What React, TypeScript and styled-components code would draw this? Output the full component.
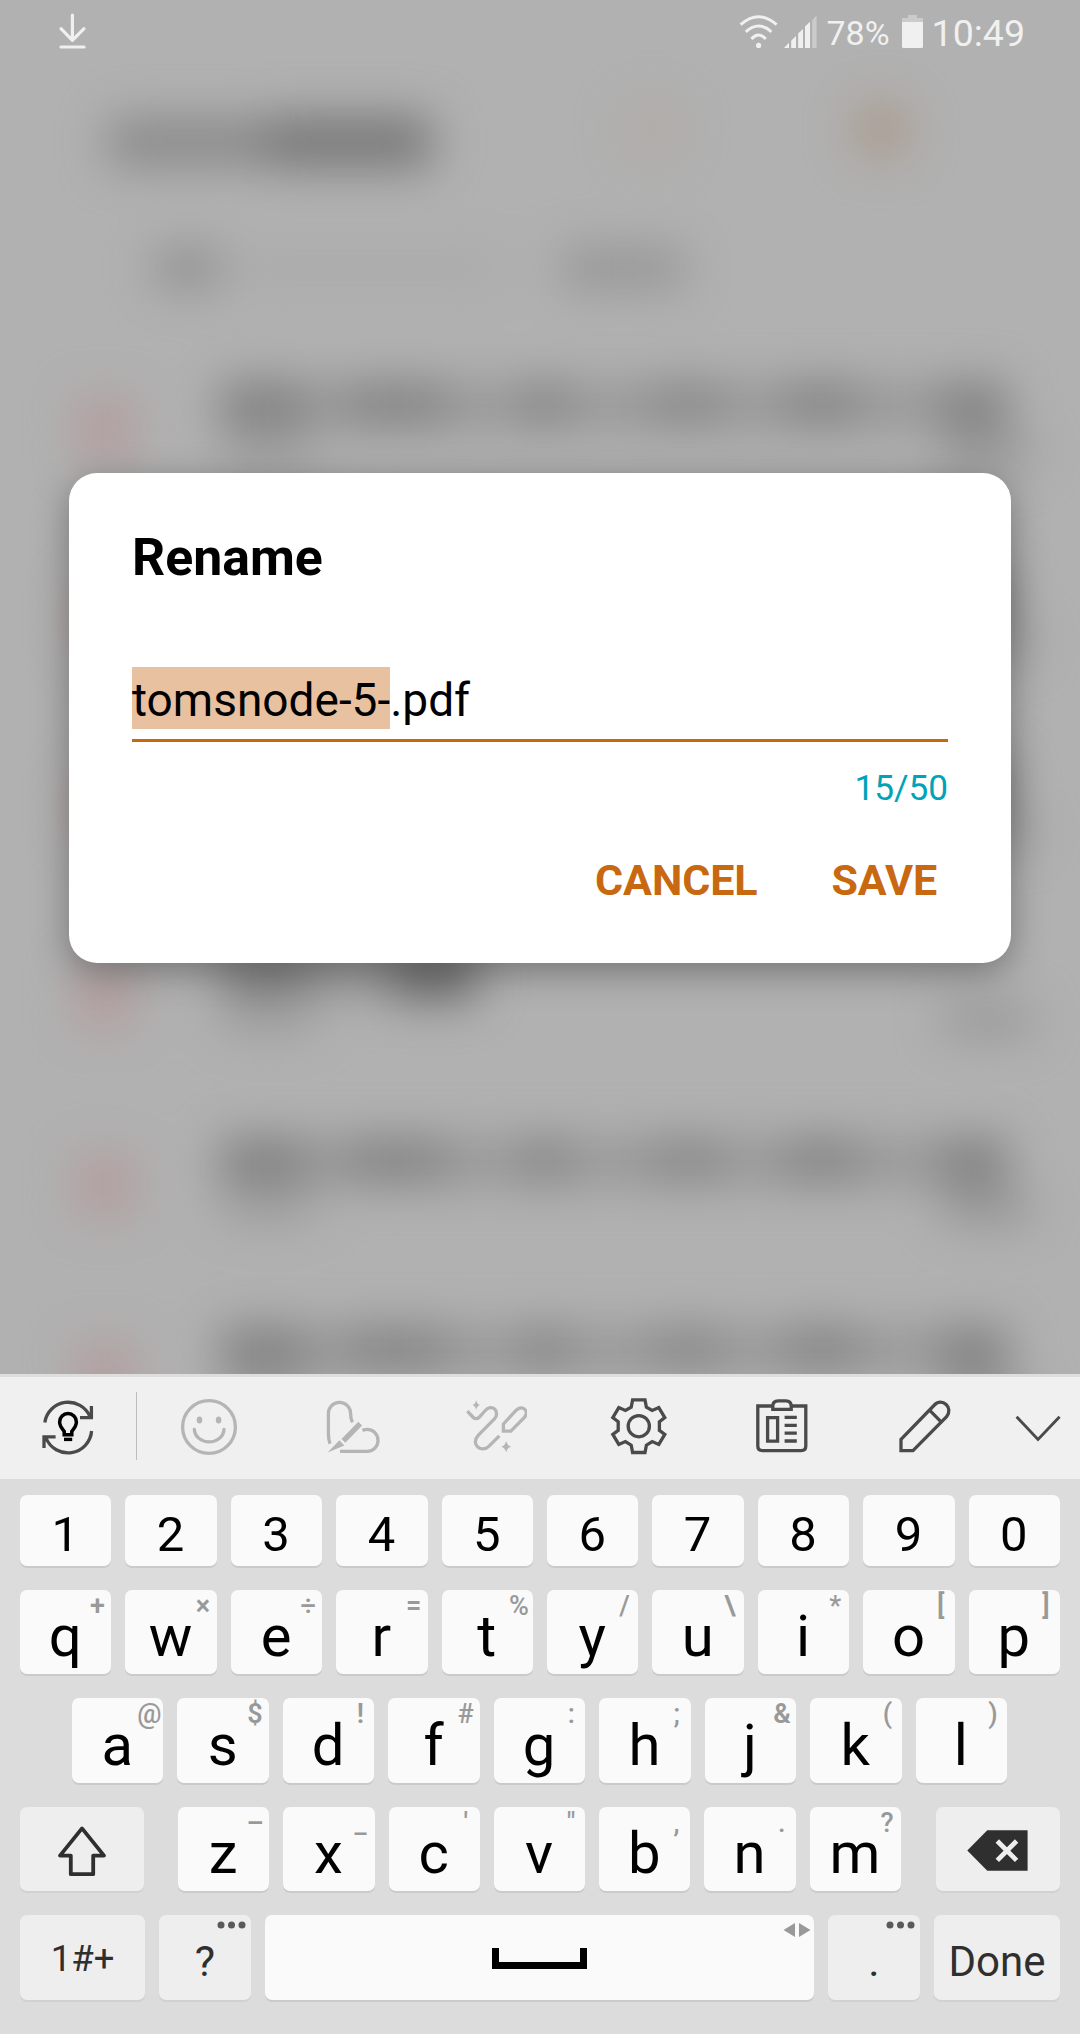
import React from "react";
import styled, { createGlobalStyle } from "styled-components";

const GlobalStyle = createGlobalStyle`
  * { box-sizing: border-box; }
  body { margin: 0; background: #b1b1b1; }
`;

const accent = "#c86810";

const Screen = styled.main`
  position: relative;
  width: 1080px;
  height: 2034px;
  display: flex;
  flex-direction: column;
  overflow: hidden;
  background: #b1b1b1;
  color: #000;
  font-family: Roboto, "Noto Sans", sans-serif;
`;

/* ---------- dimmed file list behind the dialog ---------- */

const Backdrop = styled.div`
  position: absolute;
  inset: 0 0 560px 0;
  overflow: hidden;
  filter: blur(23px);
`;

const BackHeader = styled.div`
  display: flex;
  align-items: center;
  height: 100px;
  margin-top: 92px;
  padding-left: 108px;
`;

const BackPath = styled.div`
  display: flex;
  align-items: center;
  height: 60px;
  margin-top: 46px;
  padding-left: 155px;
`;

const BackList = styled.div`
  margin-top: 26px;
`;

const Smudge = styled.span<{ w: number; h: number; tone: string; gap?: number; round?: boolean }>`
  flex: none;
  width: ${(p) => p.w}px;
  height: ${(p) => p.h}px;
  margin-left: ${(p) => p.gap ?? 0}px;
  margin-bottom: ${(p) => (p.round ? 24 : 0)}px;
  border-radius: ${(p) => (p.round ? "50%" : "6px")};
  background: ${(p) => p.tone};
`;

const BackRow = styled.div`
  display: flex;
  height: 189px;
  padding: 58px 0 0 76px;
`;

const BackThumb = styled.span`
  flex: none;
  width: 58px;
  height: 62px;
  margin-top: 16px;
  background: #b39d9d;
`;

const BackText = styled.div`
  margin-left: 86px;
  width: 812px;
`;

const BackTitle = styled.div<{ w: number }>`
  display: flex;
  width: ${(p) => p.w}px;
  height: 48px;
  background: #989898;
`;

const BackMeta = styled.div`
  display: flex;
  justify-content: space-between;
  margin-top: 10px;
`;

/* ---------- status bar ---------- */

const StatusBar = styled.header`
  position: relative;
  display: flex;
  align-items: flex-start;
  height: 60px;
  padding: 12px 55px 0 57px;
  color: #f0f0f0;
`;

const StatusIcon = styled.svg<{ gap?: number }>`
  display: block;
  flex: none;
  margin-left: ${(p) => p.gap ?? 0}px;
`;

const StatusText = styled.span<{ size: number; gap: number; drop?: number }>`
  font-size: ${(p) => p.size}px;
  line-height: 40px;
  margin: ${(p) => p.drop ?? 0}px 0 0 ${(p) => p.gap}px;
`;

const Spacer = styled.span`
  flex: 1;
`;

/* ---------- dialog ---------- */

const Stage = styled.section`
  height: 1374px;
  flex: none;
`;

const Dialog = styled.div`
  position: relative;
  width: 942px;
  height: 490px;
  margin: 413px auto 0 69px;
  padding: 55px 63px 0;
  border-radius: 28px;
  background: #fff;
  box-shadow: 0 9px 36px rgba(0, 0, 0, 0.34);
`;

const Title = styled.h1`
  margin: 0;
  font-size: 51.8px;
  line-height: 60px;
  font-weight: 700;
`;

const Field = styled.div`
  display: flex;
  height: 75px;
  margin-top: 79px;
  padding-bottom: 10px;
  border-bottom: 3px solid ${accent};
  font-size: 46px;
  line-height: 66px;
`;

const Selected = styled.span`
  height: 62px;
  background: #e8c1a1;
`;

const Counter = styled.div`
  margin-top: 25px;
  text-align: right;
  font-size: 35.2px;
  line-height: 42px;
  color: #00a3b8;
`;

const Actions = styled.div`
  display: flex;
  justify-content: flex-end;
  gap: 74px;
  margin-top: 46px;
  padding-right: 11px;
`;

const Action = styled.button`
  padding: 0;
  border: 0;
  background: none;
  font: 700 43px/50px Roboto, "Noto Sans", sans-serif;
  letter-spacing: -0.1px;
  color: ${accent};
`;

/* ---------- keyboard ---------- */

const Keyboard = styled.section`
  position: relative;
  flex: 1;
  background: #dcdcdc;
`;

const Toolbar = styled.div`
  display: flex;
  align-items: center;
  height: 105px;
  border-top: 3px solid #dedede;
  background: #f0f0f0;
`;

const Tool = styled.div<{ w?: number }>`
  display: flex;
  justify-content: center;
  flex: ${(p) => (p.w ? `0 0 ${p.w}px` : "1")};
`;

const Divider = styled.span`
  width: 1px;
  height: 68px;
  margin-top: -4px;
  background: #bdbdbd;
`;

const Rows = styled.div`
  display: flex;
  flex-direction: column;
  gap: 24px;
  padding: 16px 20px 0;
`;

const Row = styled.div<{ h: number; inset?: number }>`
  display: flex;
  gap: 14px;
  height: ${(p) => p.h}px;
  padding: 0 ${(p) => (p.inset ? p.inset + 1 : 0)}px 0 ${(p) => p.inset ?? 0}px;
`;

const Key = styled.div<{ size?: number; drop?: number; w?: number; alt?: boolean; left?: number; right?: number }>`
  position: relative;
  display: flex;
  align-items: center;
  justify-content: center;
  flex: ${(p) => (p.w ? `0 0 ${p.w}px` : "1 1 0")};
  min-width: 0;
  margin: 0 ${(p) => p.right ?? 0}px 0 ${(p) => p.left ?? 0}px;
  padding-top: ${(p) => p.drop ?? 0}px;
  padding-right: ${(p) => (p.alt ? 0 : 1)}px;
  border-radius: 7px;
  background: ${(p) => (p.alt ? "#eeeeee" : "#fafafa")};
  box-shadow: 0 2px 0 ${(p) => (p.alt ? "#d1d1d1" : "#cacaca")};
  color: ${(p) => (p.alt ? "#2f2f2f" : "#000")};
  font-size: ${(p) => p.size ?? 58}px;
  line-height: 1;
`;

const Hint = styled.span<{ bold?: boolean }>`
  position: absolute;
  top: 0;
  right: 0;
  width: 28px;
  display: flex;
  justify-content: center;
  font-size: 27px;
  line-height: 32px;
  font-weight: ${(p) => (p.bold ? 600 : 500)};
  color: #999;
`;

const Corner = styled.svg<{ inset: number; drop: number }>`
  position: absolute;
  top: ${(p) => p.drop}px;
  right: ${(p) => p.inset}px;
`;

const SpaceMark = styled.span`
  width: 95px;
  height: 21px;
  margin-top: 2px;
  border: 7px solid #000;
  border-top: 0;
`;

const digits = "1234567890".split("");
const boldHints = new Set(["+", "×", "=", "\\", "[", "]", "$", "!", "&"]);
const topRow: [string, string][] = [
  ["q", "+"], ["w", "×"], ["e", "÷"], ["r", "="], ["t", "%"],
  ["y", "/"], ["u", "\\"], ["i", "*"], ["o", "["], ["p", "]"],
];
const homeRow: [string, string][] = [
  ["a", "@"], ["s", "$"], ["d", "!"], ["f", "#"], ["g", ":"],
  ["h", ";"], ["j", "&"], ["k", "("], ["l", ")"],
];
const bottomRow: [string, string][] = [
  ["z", "–"], ["x", "_"], ["c", "'"], ["v", '"'], ["b", ","], ["n", "."], ["m", "?"],
];

const LetterKey = ({ pair }: { pair: [string, string] }) => (
  <Key drop={8}>
    {pair[0]}
    <Hint bold={boldHints.has(pair[1])}>{pair[1]}</Hint>
  </Key>
);

const ToolIcon = ({ x, color = "#4a4a4a", children }: { x: number; color?: string; children: React.ReactNode }) => (
  <svg width="64" height="64" viewBox={`${x - 32} 1396 64 64`} fill="none" stroke={color} strokeWidth="3.3">
    {children}
  </svg>
);

const Dots = () => (
  <Corner inset={5} drop={6} width="29" height="8" viewBox="0 0 29 8" fill="#5a5a5a">
    <circle cx="4" cy="4" r="3.5" />
    <circle cx="14.5" cy="4" r="3.5" />
    <circle cx="25" cy="4" r="3.5" />
  </Corner>
);

const FileRow = ({ short }: { short?: boolean }) => (
  <BackRow>
    <BackThumb />
    <BackText>
      {short ? (
        <BackTitle w={256}>
          <Smudge w={84} h={48} tone="#7e7e7e" gap={4} />
          <Smudge w={84} h={52} tone="#6c6c6c" gap={84} />
        </BackTitle>
      ) : (
        <BackTitle w={775}>
          <Smudge w={86} h={48} tone="#808080" />
          <Smudge w={100} h={42} tone="#828282" gap={40} />
          <Smudge w={42} h={42} tone="#828282" gap={78} />
          <Smudge w={70} h={40} tone="#868686" gap={86} />
          <Smudge w={74} h={40} tone="#828282" gap={62} />
          <Smudge w={66} h={50} tone="#808080" gap={84} />
        </BackTitle>
      )}
      <BackMeta>
        <Smudge w={92} h={24} tone="#999" gap={2} />
        <Smudge w={90} h={26} tone="#909090" />
      </BackMeta>
    </BackText>
  </BackRow>
);

export default function App() {
  return (
    <Screen>
      <GlobalStyle />
      <Backdrop aria-hidden>
        <BackHeader>
          <Smudge w={157} h={48} tone="#8a8a8a" />
          <Smudge w={167} h={52} tone="#787878" />
          <Smudge w={56} h={56} tone="#b1aaa4" gap={192} round />
          <Smudge w={58} h={58} tone="#aa9a8c" gap={172} round />
        </BackHeader>
        <BackPath>
          <Smudge w={66} h={40} tone="#909090" />
          <Smudge w={260} h={20} tone="#a6a6a6" gap={20} />
          <Smudge w={124} h={40} tone="#959595" gap={60} />
        </BackPath>
        <BackList>
          <FileRow />
          <FileRow />
          <FileRow />
          <FileRow short />
          <FileRow />
          <FileRow />
        </BackList>
      </Backdrop>

      <Stage>
        <StatusBar>
          <StatusIcon width="30" height="40" viewBox="57 12 30 40" fill="none" stroke="#f0f0f0" strokeWidth="3.2" strokeLinecap="round" strokeLinejoin="round">
            <path d="M72.4 15V40M61 28.7L72.4 40.4L84 28.7M61 47H84" />
          </StatusIcon>
          <Spacer />
          <StatusIcon width="42" height="40" viewBox="739 12 42 40" fill="none" stroke="#f0f0f0" strokeWidth="3">
            <path d="M741.6 24.6Q759.6 8.8 777.6 24.6M746.8 31.8Q759.6 20.2 772.4 31.8M752.4 39Q759.6 31 766.8 39" />
            <circle cx="759.6" cy="45.4" r="2.6" fill="#f0f0f0" stroke="none" />
          </StatusIcon>
          <StatusIcon gap={3} width="35" height="40" viewBox="784 12 35 40" fill="#f0f0f0">
            <path d="M785 48L790 42.8V48ZM792.2 48V40.8L797 36V48ZM799.2 48V33.6L804 28.9V48ZM806 48V26.6L811 21.8V48Z" />
            <path d="M813.2 48V20L817.6 15.6V48Z" fill="#cbcbcb" />
          </StatusIcon>
          <StatusText size={34} gap={8} drop={1}>78%</StatusText>
          <StatusIcon gap={11} width="23" height="40" viewBox="901 12 23 40">
            <path d="M902 22V18H908V15H917V18H923V22Z" fill="#cbcbcb" />
            <path d="M902 22H923V46.5Q923 48 921.5 48H903.5Q902 48 902 46.5Z" fill="#f0f0f0" />
          </StatusIcon>
          <StatusText size={37.5} gap={8} drop={1}>10:49</StatusText>
        </StatusBar>

        <Dialog role="dialog">
          <Title>Rename</Title>
          <Field>
            <Selected>tomsnode-5-</Selected>
            <span>.pdf</span>
          </Field>
          <Counter>15/50</Counter>
          <Actions>
            <Action>CANCEL</Action>
            <Action>SAVE</Action>
          </Actions>
        </Dialog>
      </Stage>

      <Keyboard>
        <Toolbar>
          <Tool w={136}>
            <ToolIcon x={68}>
              <path d="M44.8 1422.4A23.7 23.7 0 0 1 90 1416.6M91.4 1406V1417.6H80M91.6 1431A23.7 23.7 0 0 1 46 1438M44 1448V1436.8H55.6" />
              <g stroke="#000">
                <path d="M64.2 1434.8V1431.4C62 1428.6 59.6 1426 59.6 1422A8.4 8.4 0 0 1 76.4 1422C76.4 1426 74 1428.6 71.8 1431.4V1434.8Z" strokeWidth="3.5" />
                <path d="M64 1439.4H72.2" strokeWidth="3.4" />
              </g>
            </ToolIcon>
          </Tool>
          <Divider />
          <Tool w={143.2}>
            <ToolIcon x={209} color="#b5b5b5">
              <circle cx="209" cy="1427" r="26.4" />
              <path d="M194.3 1429.5C196 1446 222.4 1446 224 1429.5" strokeLinecap="round" />
              <ellipse cx="199.5" cy="1420" rx="2.8" ry="3.6" fill="#b5b5b5" stroke="none" />
              <ellipse cx="218.6" cy="1420" rx="2.8" ry="3.6" fill="#b5b5b5" stroke="none" />
            </ToolIcon>
          </Tool>
          <Tool w={143.2}>
            <ToolIcon x={352} color="#b5b5b5">
              <path d="M330 1443.8C328.6 1440 328.4 1438 328.4 1434V1413.5A11 11 0 0 1 350.6 1413.5C350.6 1418 351 1419.5 352.4 1422.4M362.4 1430.4C365 1429.4 366 1429.4 367.4 1429.4A10.6 11 0 0 1 367.4 1451.4H340" />
              <path d="M360.2 1423.6L343.4 1440.8" strokeWidth="5.4" />
              <path d="M327.6 1452.6L339.4 1440.2L344.4 1445.6Z" fill="#b5b5b5" stroke="none" />
            </ToolIcon>
          </Tool>
          <Tool w={143.2}>
            <ToolIcon x={495.2} color="#b5b5b5">
              <path d="M467.5 1411.2L473 1417Q476.3 1420.4 479.6 1417L485 1411C492 1402.6 501 1411.6 494.6 1419L478.4 1435.4C470 1444.6 482 1453.4 489 1446.4L499.6 1435.8" />
              <path d="M503.6 1424L516.4 1410.2C523 1404.4 530 1411.2 524.4 1417.6L511 1431.2H503.6Z" />
              <path d="M476.4 1400.2Q477.2 1404.2 480.4 1405Q477.2 1405.8 476.4 1410Q475.6 1405.8 472.4 1405Q475.6 1404.2 476.4 1400.2ZM506.4 1440.8Q507.4 1445.8 511.4 1446.7Q507.4 1447.6 506.4 1452.6Q505.4 1447.6 501.4 1446.7Q505.4 1445.8 506.4 1440.8Z" fill="#b5b5b5" stroke="none" />
            </ToolIcon>
          </Tool>
          <Tool w={143.2}>
            <ToolIcon x={638.4}>
              <g transform="translate(639.2 1426.2)">
                <path d="M-6.2 -26.3H6.2L7.6 -19L13.4 -15.8L20 -18.6L26 -8.6L20.6 -4.4V4.2L26 8.2L20 18.2L13.4 15.4L7.6 19L6.2 26.3H-6.2L-7.6 19L-13.4 15.4L-20 18.2L-26 8.2L-20.6 4.2V-4.4L-26 -8.6L-20 -18.6L-13.4 -15.8L-7.6 -19Z" />
                <circle r="10.6" />
              </g>
            </ToolIcon>
          </Tool>
          <Tool w={143.2}>
            <ToolIcon x={781.2}>
              <path d="M773 1406H758V1446Q758 1450.6 762.6 1450.6H801.4Q806 1450.6 806 1446V1406H791.4" />
              <path d="M773 1409.4V1406Q773 1400.8 778.4 1400.8H786Q791.4 1400.8 791.4 1406V1409.4Z" />
              <path d="M767.8 1417.6H777.8V1441.2H767.8ZM784.8 1417.4H797M784.8 1425.4H797M784.8 1433.2H797M784.8 1441H797" />
            </ToolIcon>
          </Tool>
          <Tool w={143.2}>
            <ToolIcon x={924.8}>
              <path d="M900.8 1439.4V1450.6H912.8L946.4 1416.6C953.6 1407.6 942 1397 934.2 1405ZM929.8 1410.6L941.2 1422.2" />
            </ToolIcon>
          </Tool>
          <Tool>
            <ToolIcon x={1038}>
              <path d="M1016.6 1416.8L1038 1439.4L1059.6 1416.8" strokeWidth="2.9" />
            </ToolIcon>
          </Tool>
        </Toolbar>

        <Rows>
          <Row h={71}>
            {digits.map((d) => (
              <Key key={d} size={49} drop={7}>{d}</Key>
            ))}
          </Row>
          <Row h={84}>
            {topRow.map((p) => <LetterKey key={p[0]} pair={p} />)}
          </Row>
          <Row h={85} inset={52}>
            {homeRow.map((p) => <LetterKey key={p[0]} pair={p} />)}
          </Row>
          <Row h={84}>
            <Key alt w={124} right={20} drop={3}>
              <svg width="52" height="54" viewBox="56 1823 52 54" fill="none" stroke="#2f2f2f" strokeWidth="3.8" strokeLinejoin="round">
                <path d="M82 1827.4L104 1854.6H93.2V1873.2H70.8V1854.6H60Z" />
              </svg>
            </Key>
            {bottomRow.map((p) => <LetterKey key={p[0]} pair={p} />)}
            <Key alt w={124} left={21} drop={3}>
              <svg width="62" height="42" viewBox="966 1830 62 42">
                <path d="M966.3 1850.5L986.3 1830.2H1026.6V1870.8H986.3Z" fill="#2f2f2f" />
                <path d="M996.3 1841L1015.6 1860.4M1015.6 1841L996.3 1860.4" stroke="#eee" strokeWidth="4.8" />
              </svg>
            </Key>
          </Row>
          <Row h={85}>
            <Key alt w={125} size={36.5} drop={3}>1#+</Key>
            <Key alt w={92} size={43} drop={8}>
              ?
              <Dots />
            </Key>
            <Key>
              <SpaceMark />
              <Corner inset={3} drop={8} width="28" height="14" viewBox="0 0 28 14" fill="#999">
                <path d="M0.5 7L12 0V14ZM16 0L27.5 7L16 14Z" />
              </Corner>
            </Key>
            <Key alt w={92} size={43} drop={8}>
              .
              <Dots />
            </Key>
            <Key alt w={126} size={42} drop={8}>Done</Key>
          </Row>
        </Rows>
      </Keyboard>
    </Screen>
  );
}
